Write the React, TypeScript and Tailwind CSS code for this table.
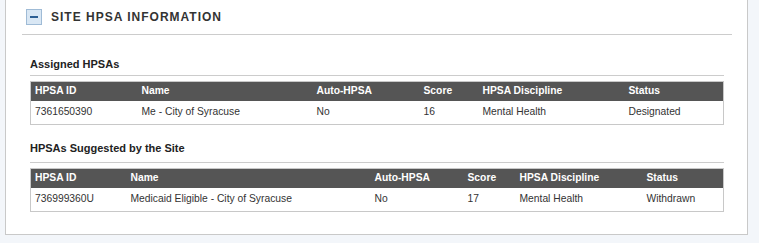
import React from 'react';

type Col = { label: string; width: string };

interface HpsaTableProps {
  cols: Col[];
  rows: string[][];
}

const HpsaTable: React.FC<HpsaTableProps> = ({ cols, rows }) => (
  <table className="w-full table-fixed border-collapse border border-[#c8c8c8] text-[10.3px]">
    <colgroup>
      {cols.map((c) => (
        <col key={c.label} style={{ width: c.width }} />
      ))}
    </colgroup>
    <thead>
      <tr className="h-[19px] bg-[#555555] text-white">
        {cols.map((c) => (
          <th key={c.label} className="px-[4px] text-left font-bold leading-none">
            {c.label}
          </th>
        ))}
      </tr>
    </thead>
    <tbody>
      {rows.map((r, i) => (
        <tr key={i} className="h-[24px] text-[#333]">
          {r.map((v, j) => (
            <td key={j} className="px-[4px] pb-[1px] leading-none">
              {v}
            </td>
          ))}
        </tr>
      ))}
    </tbody>
  </table>
);

const assignedCols: Col[] = [
  { label: 'HPSA ID', width: '107px' },
  { label: 'Name', width: '175px' },
  { label: 'Auto-HPSA', width: '107px' },
  { label: 'Score', width: '59px' },
  { label: 'HPSA Discipline', width: '146px' },
  { label: 'Status', width: '99px' },
];

const suggestedCols: Col[] = [
  { label: 'HPSA ID', width: '96px' },
  { label: 'Name', width: '244px' },
  { label: 'Auto-HPSA', width: '93px' },
  { label: 'Score', width: '52px' },
  { label: 'HPSA Discipline', width: '127px' },
  { label: 'Status', width: '81px' },
];

export default function App() {
  return (
    <div
      className="w-[759px] h-[243px] bg-[#f3f6fa] pl-[5px] pr-[11px]"
      style={{ fontFamily: '"Liberation Sans", Arial, sans-serif' }}
    >
      <div className="h-[235px] border-x border-b border-[#c9c9c9] bg-white pl-[16px] pr-[15px]">
        {/* Section header */}
        <div className="flex h-[35px] items-center border-b border-[#cccccc] pl-[4px] pb-[1px]">
          <span className="flex h-[16px] w-[16px] items-center justify-center border border-[#9fbbd6] bg-[#d9e7f4]">
            <span className="block h-[2px] w-[8px] bg-[#2d5f93]" />
          </span>
          <h2 className="ml-[9px] text-[12px] font-bold tracking-[1px] text-[#333]">
            SITE HPSA INFORMATION
          </h2>
        </div>

        <div className="px-[8px] pt-[20px]">
          <h3 className="flex h-[21px] items-center border-b border-[#cccccc] pb-[1px] text-[11px] font-bold text-[#222]">
            Assigned HPSAs
          </h3>
          <div className="mt-[5px]">
            <HpsaTable
              cols={assignedCols}
              rows={[['7361650390', 'Me - City of Syracuse', 'No', '16', 'Mental Health', 'Designated']]}
            />
          </div>

          <h3 className="mt-[11px] flex h-[27px] items-center border-b border-[#cccccc] pb-[1px] text-[11px] font-bold text-[#222]">
            HPSAs Suggested by the Site
          </h3>
          <div className="mt-[5px]">
            <HpsaTable
              cols={suggestedCols}
              rows={[
                ['736999360U', 'Medicaid Eligible - City of Syracuse', 'No', '17', 'Mental Health', 'Withdrawn'],
              ]}
            />
          </div>
        </div>
      </div>
    </div>
  );
}
